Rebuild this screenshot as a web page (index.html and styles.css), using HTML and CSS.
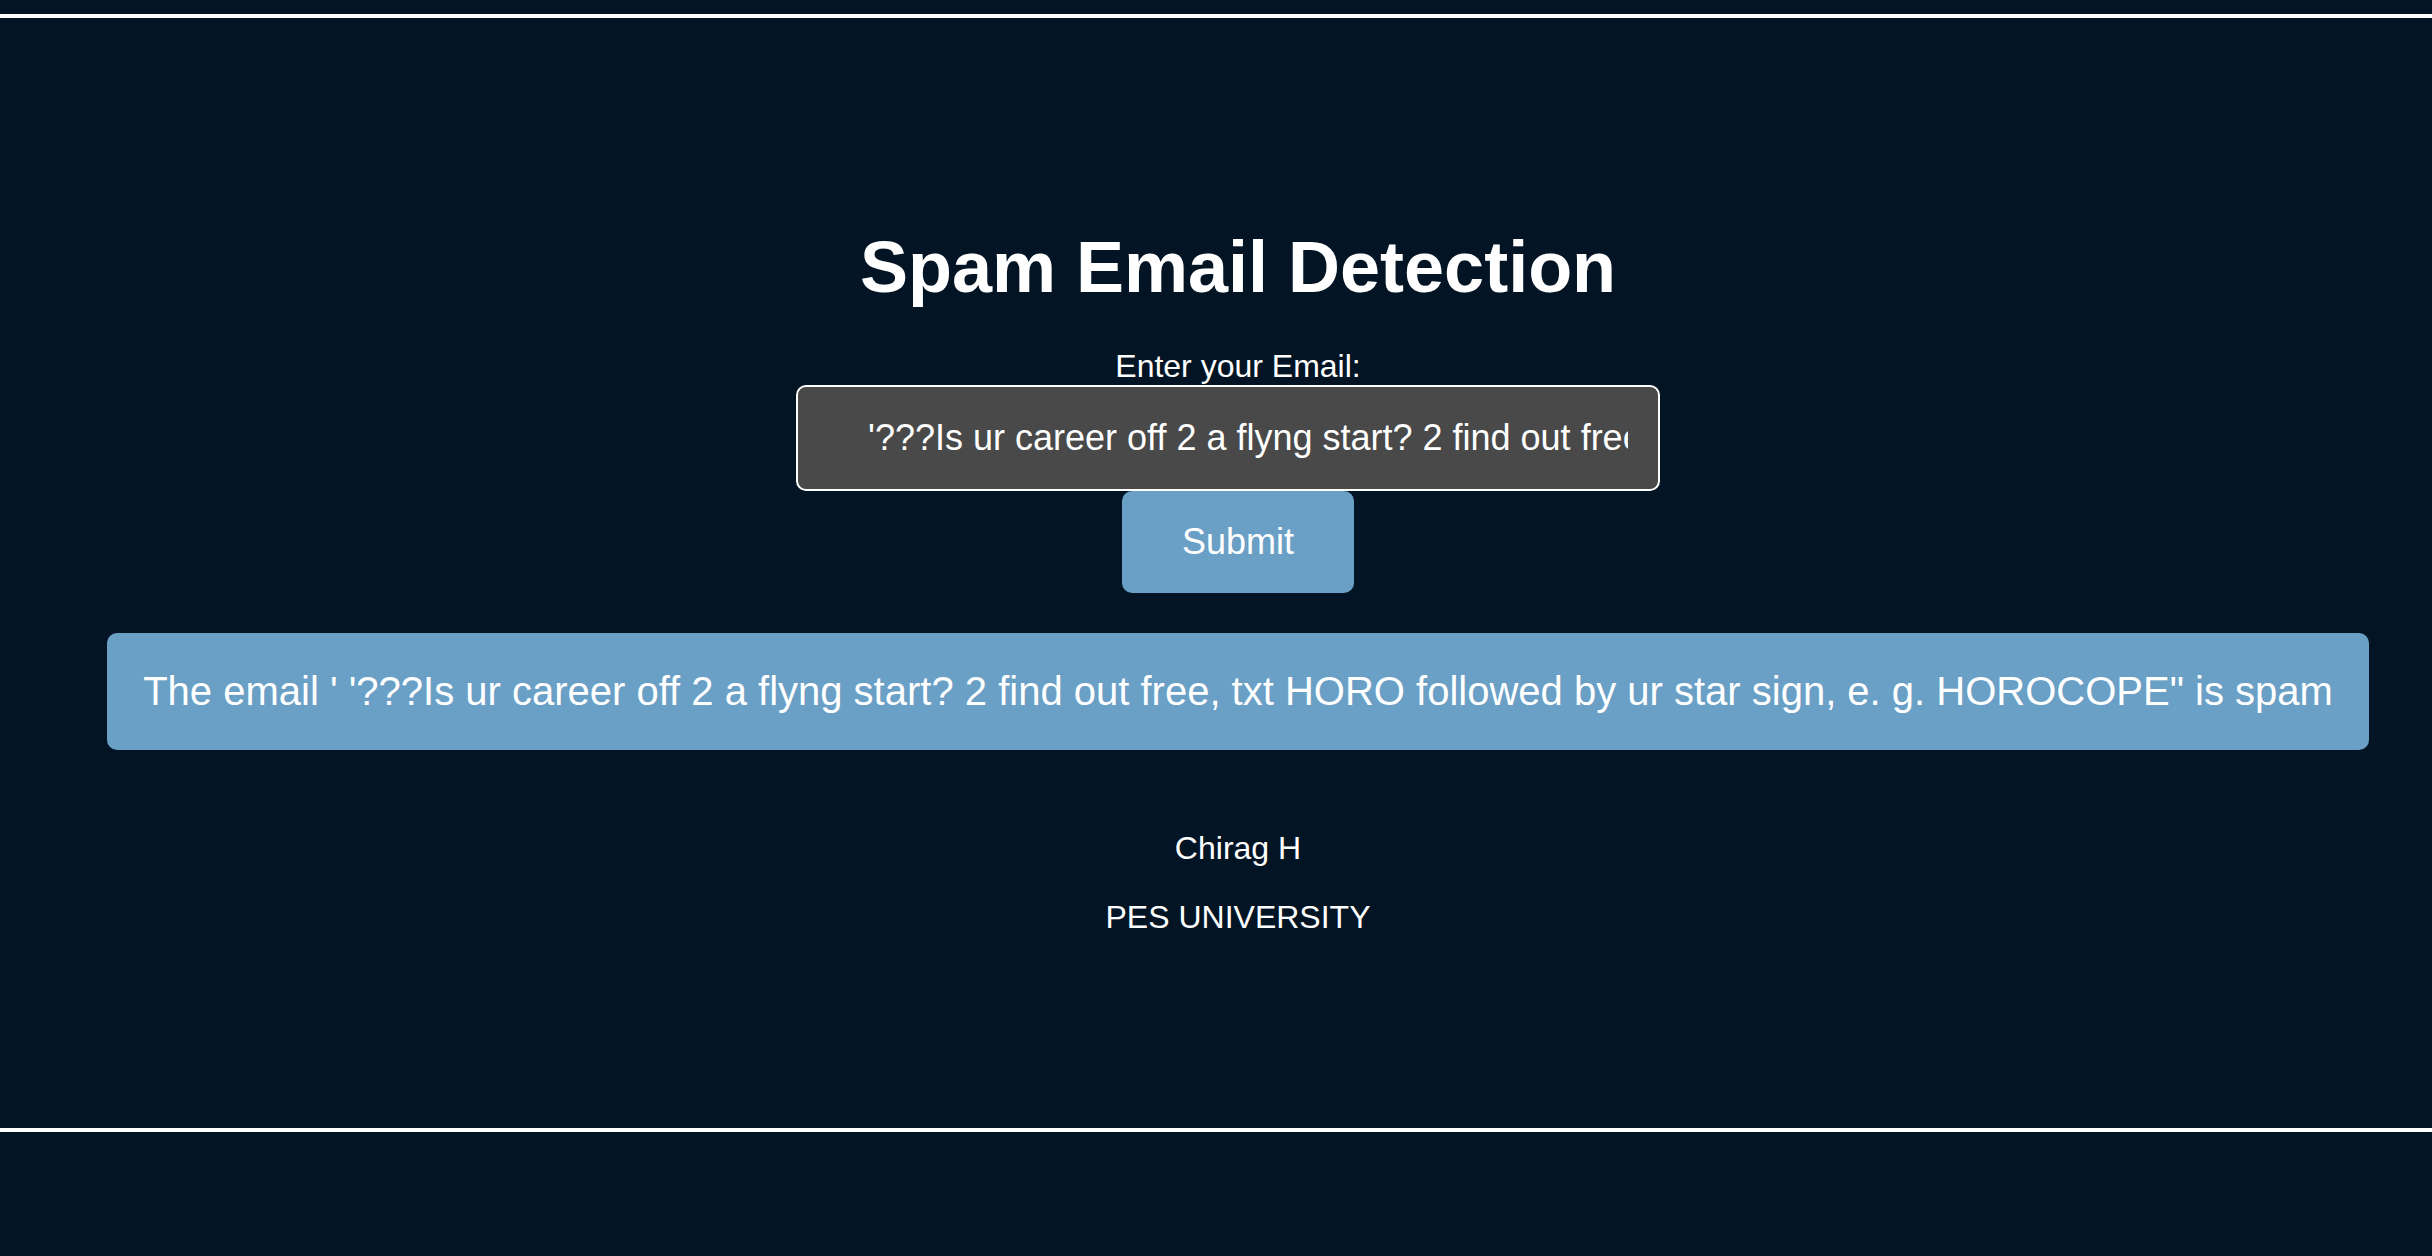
FILE: index.html
```html
<!DOCTYPE html>
<html lang="en">
<head>
<meta charset="utf-8">
<meta name="viewport" content="width=device-width, initial-scale=1">
<title>Spam Email Detection</title>
<link rel="stylesheet" href="styles.css">
</head>
<body>
<main class="detector">
  <h1 class="title">Spam Email Detection</h1>
  <form class="form">
    <label class="label" for="email">Enter your Email:</label>
    <input class="field" id="email" type="text" name="email" value="    '???Is ur career off 2 a flyng start? 2 find out free, txt HORO followed by ur star sign, e. g. HOROCOPE&quot;">
    <button class="submit" type="submit">Submit</button>
  </form>
  <p class="result">The email ' '???Is ur career off 2 a flyng start? 2 find out free, txt HORO followed by ur star sign, e. g. HOROCOPE" is spam</p>
  <footer class="credits">
    <p class="credit">Chirag H</p>
    <p class="credit">PES UNIVERSITY</p>
  </footer>
</main>
</body>
</html>
```
FILE: styles.css
```css
* {
  box-sizing: border-box;
}

body {
  margin: 14px 0 0;
  background: #031525;
  color: #fff;
  font-family: "Liberation Sans", Arial, sans-serif;
  font-size: 32px;
  line-height: 37px;
}

.detector {
  display: flex;
  flex-direction: column;
  align-items: center;
  padding: 208px 0 192px 44px;
  border-top: 4px solid #fff;
  border-bottom: 4px solid #fff;
}

.title {
  margin: 0 0 40px;
  font-size: 72px;
  line-height: 82px;
}

.form {
  display: flex;
  flex-direction: column;
  align-items: center;
  width: 100%;
  margin-bottom: 40px;
}

.field {
  width: 864px;
  max-width: 100%;
  margin: 0 20px 0 0;
  padding: 30px;
  border: 2px solid #fff;
  border-radius: 10px;
  background: #494949;
  color: #fff;
  font: inherit;
  font-size: 36px;
  line-height: 42px;
}

.submit {
  padding: 30px 60px;
  border: 0;
  border-radius: 10px;
  background: #6a9fc6;
  color: #fff;
  font: inherit;
  font-size: 36px;
  line-height: 42px;
  cursor: pointer;
}

.result {
  margin: 0 0 80px;
  padding: 36px;
  border-radius: 10px;
  background: #6a9fc6;
  font-size: 40px;
  line-height: 45px;
}

.credits {
  display: flex;
  flex-direction: column;
  gap: 32px;
  text-align: center;
}

.credit {
  margin: 0;
}
```
